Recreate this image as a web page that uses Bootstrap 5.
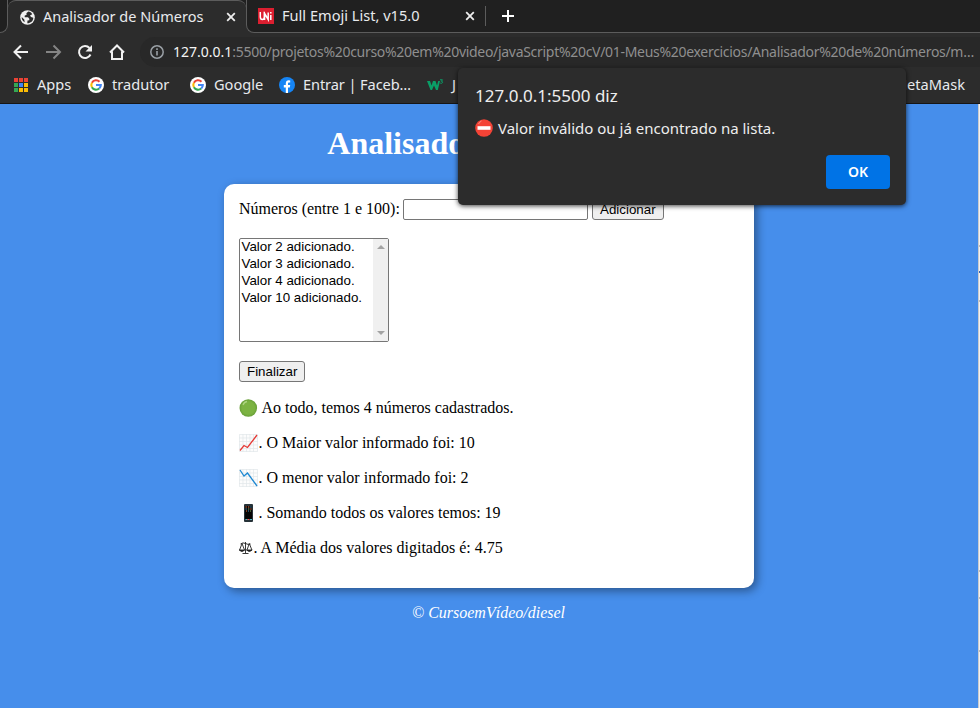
<!DOCTYPE html>
<html lang="pt-br">
<head>
<meta charset="utf-8">
<title>Analisador de Números</title>
<link href="https://cdn.jsdelivr.net/npm/bootstrap@5.3.0/dist/css/bootstrap.min.css" rel="stylesheet">
<style>
body{width:980px;height:708px;background:#468eeb;font-family:"Noto Sans","Open Sans",sans-serif;color:#e8eaed}
svg{display:block;flex:none}
.chrome{height:104px;background:#2c2c2c;border-bottom:1px solid #161616}
.strip{height:33px;background:#202020}
.t-edge{width:8px;border-bottom:1px solid #5c5c5c;border-right:1px solid #5c5c5c;border-bottom-right-radius:8px;background:#202020}
.t-active{width:238px;background:#2c2c2c;border-top:1px solid #5c5c5c;border-radius:8px 8px 0 0;padding:0 10px 0 12px;font-size:14.5px}
.t-rest{border-bottom:1px solid #5c5c5c;border-left:1px solid #5c5c5c;border-bottom-left-radius:8px;padding-left:11px;font-size:14.6px}
.strip-bg{background:linear-gradient(#202020 60%,#2c2c2c 60%)}
.t-text{white-space:nowrap;line-height:20px;padding-bottom:2px}
.sep{width:1px;height:20px;background:#5c5c5c}
.tools{height:34px;padding-left:12px;margin-top:2px}
.omni{height:30px;background:#282828;border-radius:15px 0 0 15px;padding-left:10px;font-size:14px;color:#8f8f8f;white-space:nowrap;overflow:hidden}
.omni b{font-weight:400;color:#f4f4f4;letter-spacing:0}
.url{letter-spacing:-.3px;padding-bottom:1px}
.marks{height:34px;padding:0 15px 0 14px;font-size:14.6px;white-space:nowrap}
.marks span{flex:none;padding-bottom:3px}
.marks svg{margin-bottom:2px}
.view{height:604px;font-family:"Liberation Serif",serif;font-size:16px;color:#000}
.view-main{background:#468eeb}
.edge{width:2px;background:#f1f1f3;border-left:1px solid #ccc}
.edge i{display:block;height:2px;background:#bbb}
.view h1{font:bold 32px/37px "Liberation Serif",serif;color:#fff;margin:21px 1px 22px 0}
.panel{width:530px;height:404px;background:#fff;border-radius:10px;box-shadow:3px 3px 10px rgba(0,0,0,.4);padding:15px}
.ctl{font:13.333px/15px "Liberation Sans",sans-serif;color:#000}
.num{width:185px;height:21px;border:1px solid #767676;border-radius:2px;padding:1px 2px;background:#fff}
.push{height:21px;border:1px solid #767676;border-radius:3px;background:#efefef;padding:2px 7px}
.lst{width:150px;height:104px;border:1px solid #767676;border-radius:2px;background:#fff}
.lst .opt{height:17px;line-height:16px;padding-left:1.5px;white-space:nowrap}
.track{width:15px;background:#f0f0f0;padding:6px 0}
.res{height:18px;line-height:18px;margin-bottom:17px;white-space:pre}
.res span{padding-left:.4px}
.foot{font-style:italic;color:#fff;line-height:18px;margin:16px 1px 0 0}
.dlg{left:458px;top:68px;width:448px;height:137px;background:#2c2c2c;border-radius:5px;box-shadow:0 1px 5px rgba(0,0,0,.75);padding:16px 16px 16px 17px;color:#eee}
.dlg-t{font-size:17px;line-height:24px}
.dlg-m{font-size:15px;line-height:20px;margin-top:10px;white-space:nowrap}
.okb{width:64px;height:34px;background:#0073e6;color:#fff;border-radius:4px;font-size:14px;font-weight:600;padding-bottom:2px}
</style>
<script src="https://cdn.jsdelivr.net/npm/bootstrap@5.3.0/dist/js/bootstrap.bundle.min.js"></script>
</head>
<body class="overflow-hidden position-relative">
<svg width="0" height="0" class="position-absolute">
<symbol id="g" viewBox="0 0 16 16"><circle cx="8" cy="8" r="8" fill="#fff"/><g fill="none" stroke-width="2.1"><path d="M3.900 5.700A4.800 4.800 0 0 1 11.500 4.700" stroke="#ea4335"/><path d="M3.900 10.300A4.800 4.800 0 0 1 3.900 5.700" stroke="#fbbc05"/><path d="M11.200 11.500A4.800 4.800 0 0 1 3.900 10.300" stroke="#34a853"/><path d="M8 8H12.800A4.800 4.800 0 0 1 11.200 11.500" stroke="#4285f4"/></g></symbol>
<symbol id="x" viewBox="0 0 10 10"><path d="M1.200 1.200l7.600 7.600M8.800 1.200L1.200 8.800" stroke="#eee" stroke-width="1.800"/></symbol>
</svg>
<header class="chrome">
  <div class="strip strip-bg d-flex">
    <div class="t-edge"></div>
    <div class="t-active d-flex align-items-center">
      <svg width="15" height="15" viewBox="0 0 15 15"><circle cx="7.500" cy="7.500" r="7.300" fill="#f1f1f1"/><path d="M8.300 1.600L6.300 3.200 6.800 4.600 4.600 5.800 4.800 7.200H8l1.300 1.600 0 1.400-1.800.3-.2 2.800C10.800 13.300 13.300 11 13.300 7.800L11 7 10 5.500 12.200 4.200C11.400 2.600 10 1.700 8.300 1.600zM1.700 7l2.600 2.600.4 2.600C2.700 11.200 1.500 9.300 1.700 7z" fill="#2c2c2c"/></svg>
      <span class="t-text flex-grow-1" style="margin-left:8px">Analisador de Números</span>
      <svg width="10" height="10"><use href="#x"/></svg>
    </div>
    <div class="t-rest strip flex-grow-1 d-flex align-items-center">
      <svg width="16" height="16" viewBox="0 0 16 16"><path fill="#dc1f30" d="M0 0h16v16H0z"/><path d="M2.300 4v4.700q0 2.800 2 2.800T6.300 9V4M6.600 12V5.500l3.600 6V4.500M12.800 7V12M12.800 4V5.500" fill="none" stroke="#fff" stroke-width="1.500"/></svg>
      <span class="t-text" style="width:183px;margin-left:8px">Full Emoji List, v15.0</span>
      <svg width="10" height="10"><use href="#x"/></svg>
      <span class="sep" style="margin:0 16px 0 10px"></span>
      <svg width="12" height="12" viewBox="0 0 12 12"><path d="M6 0v12M0 6h12" stroke="#fff" stroke-width="2"/></svg>
    </div>
  </div>
  <nav class="tools d-flex align-items-center">
    <svg width="125" height="20" viewBox="0 0 125 20" fill="none" stroke="#f1f1f1" stroke-width="2"><path d="M16 10H3M9 3.500L2.500 10 9 16.500"/><path stroke="#858585" d="M34 10h13M41.500 3.500L48 10l-6.500 6.500"/><path d="M78.500 12.500A6 6 0 1 1 77.500 6"/><path fill="#f1f1f1" stroke="none" d="M80 3v6.500h-6.500z"/><path d="M98 10.500l7-7 7 7M100 9.500V17h10V9.500"/></svg>
    <div class="omni flex-grow-1 d-flex align-items-center" style="margin-left:3px">
      <svg width="14" height="14" viewBox="0 0 14 14"><circle cx="7" cy="7" r="6.200" fill="none" stroke="#9aa0a6" stroke-width="1.500"/><path d="M7 6v4.500M7 3.300v1.600" stroke="#9aa0a6" stroke-width="1.600"/></svg>
      <span class="url" style="margin-left:9px"><b>127.0.0.1</b>:5500/projetos%20curso%20em%20video/javaScript%20cV/01-Meus%20exercicios/Analisador%20de%20números/m…</span>
    </div>
  </nav>
  <nav class="marks d-flex align-items-center">
    <svg width="14" height="14" viewBox="0 0 14 14"><path fill="#ea4335" d="M0 0h4v4H0zM5 0h4v4H5zM10 0h4v4h-4z"/><path fill="#34a853" d="M0 5h4v4H0zM0 10h4v4H0z"/><path fill="#4285f4" d="M5 5h4v4H5z"/><path fill="#fbbc05" d="M10 5h4v4h-4zM5 10h4v4H5zM10 10h4v4h-4z"/></svg>
    <span style="width:51px;margin-left:9px">Apps</span>
    <svg width="16" height="16"><use href="#g"/></svg>
    <span style="width:78px;margin-left:8px">tradutor</span>
    <svg width="16" height="16"><use href="#g"/></svg>
    <span style="width:65px;margin-left:8px">Google</span>
    <svg width="16" height="16" viewBox="0 0 16 16"><circle cx="8" cy="8" r="8" fill="#1685f5"/><path d="M6.800 16v-5.600H4.800V8h2V6.500C6.800 4.200 8 3.300 9.700 3.300l1.500.1v2h-1C9.300 5.400 9 5.900 9 6.600V8h2.200l-.4 2.400H9V16z" fill="#fff"/></svg>
    <span style="width:124px;margin-left:8px;letter-spacing:-.1px">Entrar | Faceb…</span>
    <svg width="17" height="12" viewBox="0 0 17 12"><path d="M0 2h3l1.500 4.500L6 2h2.500L10 6.500 11.200 2H13L10.800 11H9L7 6.500 5 11H3.500z" fill="#0a9e67"/><path d="M13 .8h2.500L14.300 2.300q1.500 0 1.300 1.200-.5 1.200-2.400.6" fill="none" stroke="#0a9e67"/></svg>
    <span style="margin-left:8px">J</span>
    <span class="ms-auto">MetaMask</span>
  </nav>
</header>
<div class="view d-flex">
  <main class="view-main flex-grow-1 d-flex flex-column align-items-center">
    <h1>Analisador de Números</h1>
    <section class="panel">
      <div class="d-flex align-items-center" style="height:21px;gap:4px"><span style="width:160px;white-space:nowrap;margin-top:-2px">Números (entre 1 e 100):</span><span class="num"></span><span class="ctl push">Adicionar</span></div>
      <div class="lst ctl d-flex justify-content-between" style="margin-top:18px">
        <div><div class="opt">Valor 2 adicionado.</div><div class="opt">Valor 3 adicionado.</div><div class="opt">Valor 4 adicionado.</div><div class="opt">Valor 10 adicionado.</div></div>
        <div class="track d-flex flex-column justify-content-between align-items-center"><svg width="8" height="4"><path d="M0 4l4-4 4 4z" fill="#a3a3a3"/></svg><svg width="8" height="4"><path d="M0 0l4 4 4-4z" fill="#a3a3a3"/></svg></div>
      </div>
      <div class="d-flex" style="margin:19px 0 17px"><span class="ctl push">Finalizar</span></div>
      <div class="res d-flex align-items-center"><svg width="19" height="18" viewBox="0 0 19 18"><defs><radialGradient id="gr"><stop offset=".7" stop-color="#7cb342"/><stop offset="1" stop-color="#689f38"/></radialGradient></defs><circle cx="9.300" cy="9" r="8.800" fill="url(#gr)"/><path d="M4 6q1-3 4-3.500" stroke="#aed581" stroke-width="1.300" fill="none"/></svg><span> Ao todo, temos 4 números cadastrados.</span></div>
      <div class="res d-flex align-items-center"><svg width="19" height="18" viewBox="0 0 19 18"><path d="M.5.500h18v17H.5zM4 0v18M7.500 0v18M11 0v18M14.500 0v18M0 4h19M0 7.500h19M0 11h19M0 14.500h19" stroke="#e1e7ea" stroke-width=".7" fill="#fcfcfc"/><path d="M1 16.500l4-5 3.500 2L18 1" fill="none" stroke="#e53935" stroke-width="1.300"/></svg><span>. O Maior valor informado foi: 10</span></div>
      <div class="res d-flex align-items-center"><svg width="19" height="18" viewBox="0 0 19 18"><path d="M.5.500h18v17H.5zM4 0v18M7.500 0v18M11 0v18M14.500 0v18M0 4h19M0 7.500h19M0 11h19M0 14.500h19" stroke="#e1e7ea" stroke-width=".7" fill="#fcfcfc"/><path d="M1 1l4 6 3.500-3L18 17" fill="none" stroke="#1e88d2" stroke-width="1.300"/></svg><span>. O menor valor informado foi: 2</span></div>
      <div class="res d-flex align-items-center"><svg width="19" height="18" viewBox="0 0 19 18"><rect x="5" y="0" width="9" height="18" rx="1" fill="#263238"/><path d="M6 2h7v13H6z" fill="#050505"/><path d="M6.500 3h1.300M9 3h1.300M11.300 5h1.300M7 7h1" stroke="#ef7043" stroke-width="1.200"/><path d="M11.300 3h1.300M6.500 5h1.300M9 7h1" stroke="#4f9ccb" stroke-width="1.200"/><path d="M9 5h1.300M11 7h1" stroke="#7fb069" stroke-width="1.200"/><path d="M6.500 15.500h2M11 15.500h2" stroke="#4fb9c9"/><path d="M8.500 15.500h2" stroke="#e55"/></svg><span>. Somando todos os valores temos: 19</span></div>
      <div class="res d-flex align-items-center"><svg width="14" height="14" viewBox="0 0 14 14" fill="none" stroke="#222" stroke-width=".9"><path d="M6.500 1v11M3.500 12.500h6M1.500 3Q4 1 6.500 2.500t5 .5M3 2.500L.6 9M3 2.500L5.500 9M10.300 2.500L8 9M10.300 2.500L12.900 9"/><path fill="#222" d="M.2 9h5.500q-2.700 3-5.500 0zM7.500 9h5.600q-2.800 3-5.600 0z"/></svg><span>. A Média dos valores digitados é: 4.75</span></div>
    </section>
    <footer class="foot">© CursoemVídeo/diesel</footer>
  </main>
  <div class="edge"><i style="margin-top:141px"></i><i style="margin-top:24px;background:#3567b5"></i><i style="margin-top:27px"></i><i style="margin-top:268px"></i><i style="margin-top:25px"></i><i style="margin-top:51px"></i></div>
</div>
<div class="dlg position-absolute d-flex flex-column" role="dialog">
  <div class="dlg-t"><span>127.0.0.1:5500 diz</span></div>
  <div class="dlg-m d-flex align-items-center"><svg width="18" height="18" viewBox="0 0 18 18"><circle cx="9" cy="9" r="8.800" fill="#f44336"/><path d="M2.500 7.200h13v3.600h-13z" fill="#fff"/><path d="M3.500 5q1-2 3-3" stroke="#ff8a80" fill="none"/></svg><span style="margin-left:5px">Valor inválido ou já encontrado na lista.</span></div>
  <div class="okb d-flex align-items-center justify-content-center align-self-end mt-auto">OK</div>
</div>
</body>
</html>
